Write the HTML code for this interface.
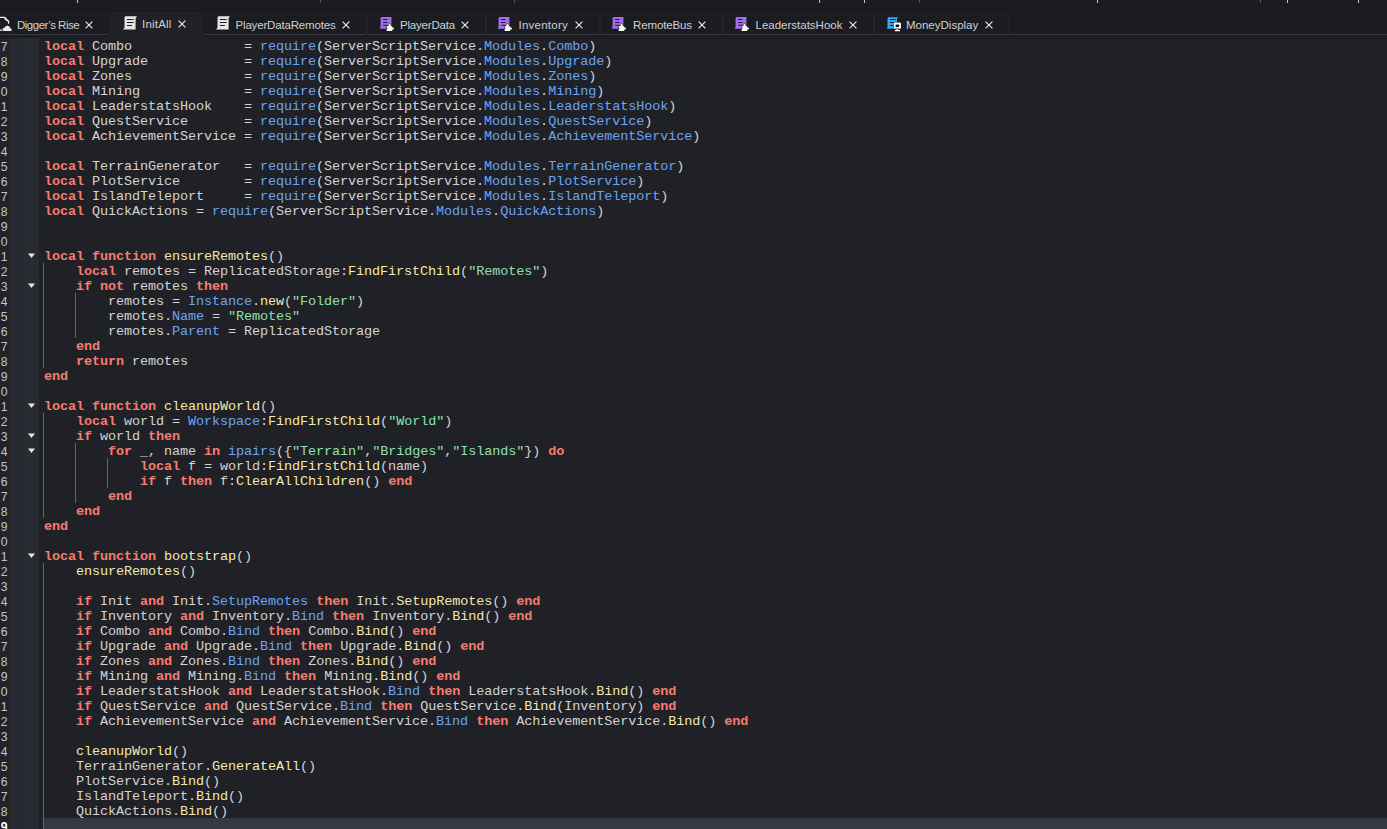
<!DOCTYPE html>
<html><head><meta charset="utf-8"><style>
*{margin:0;padding:0;box-sizing:border-box}
html,body{width:1387px;height:829px;overflow:hidden;background:#1b1c20;position:relative}
.tick{position:absolute;top:0;width:1px;height:3px;background:#c4c4cc}
.tick.dim{background:#55565e}
#tabbar{position:absolute;left:0;top:0;width:1387px;height:35px}
.tabline{position:absolute;left:0;top:34px;width:1387px;height:1px;background:#393a46}
.tab{position:absolute;top:14px;height:21px;border-left:1px solid #232429;border-right:1px solid #232429;border-top:1px solid #222328}
.tab.act{top:11px;height:25px;background:#202126;border:1px solid #18191d;border-bottom:none;box-shadow:inset 0 1px 0 #25262b}
.ico{position:absolute}
.xx{position:absolute}
.tt{position:absolute;top:18px;font:11.5px/14px "Liberation Sans",sans-serif;color:#cfd0d6;white-space:pre}
.tt.at{top:17px}
#ed{position:absolute;left:0;top:37px;width:1387px;height:792px;background:#202126;border-top:1px solid #1e1f24;overflow:hidden}
.g1{position:absolute;top:38px;left:0;width:9px;height:791px;background:#222328}
.g2{position:absolute;top:38px;left:9px;width:15px;height:791px;background:#27282f}
.g3{position:absolute;top:38px;left:24px;width:15px;height:791px;background:#292b32}
.curl{position:absolute;left:44px;top:818px;width:1343px;height:15px;background:#363842}
.ln{position:absolute;left:-0.5px;width:8px;text-align:right;font:12.2px/15px "Liberation Sans",sans-serif;color:#c2c3c8}
.ln.cur{color:#fff;font-weight:bold}
.cl{position:absolute;left:44px;font:13.5px/15px "Liberation Mono",monospace;letter-spacing:-0.1px;color:#d4d4d4;white-space:pre}
.cl b{font-weight:normal}
.cl b.k{color:#f87b6f;font-weight:bold}
.cl b.f{color:#f4e8ae}
.cl b.p{color:#6aa4f5}
.cl b.s{color:#8fe0ae}
.fold{position:absolute;left:27px}
.guide{position:absolute;width:1px;background:#5f647b}
</style></head><body>
<div class="tick" style="left:77px"></div><div class="tick dim" style="left:320px"></div><div class="tick dim" style="left:514px"></div><div class="tick" style="left:819px"></div><div class="tick" style="left:864px"></div><div class="tick dim" style="left:919px"></div><div class="tick" style="left:1097px"></div><div class="tick dim" style="left:1260px"></div><div class="tick" style="left:1287px"></div><div class="tick" style="left:1358px"></div>
<div class="tabline"></div>
<div class="tab" style="left:-10px;width:118px;border-right:none;"></div><svg class="ico" style="left:0px;top:13px" width="14" height="20" viewBox="0 0 14 20"><path d="M-2 4.4 H4.6 L8.6 8.2 V10.8" fill="none" stroke="#ececec" stroke-width="1.25"/><path d="M4.8 4.6 Q4.9 7.4 8.4 8.0" fill="none" stroke="#ececec" stroke-width="1.1"/><path d="M-2 17.2 H2.3" stroke="#ececec" stroke-width="1.25"/><path d="M3.4 17.9 A1.7 1.7 0 0 1 4.6 14.8 A3 3 0 0 1 10.4 15.4 A1.3 1.3 0 0 1 11 17.9 Z" fill="#ececec"/></svg><div class="tt" style="left:17px;letter-spacing:-0.5px">Digger’s Rise</div><svg class="xx" style="left:85px;top:21px" width="8" height="8" viewBox="0 0 8 8"><path d="M0.6 0.6 L7.4 7.4 M7.4 0.6 L0.6 7.4" stroke="#ececec" stroke-width="1.15"/></svg><div class="tab act" style="left:108px;width:96px;"></div><svg class="ico" style="left:122px;top:15px" width="16" height="16" viewBox="0 0 16 16"><path d="M3.6 1.2 Q2.6 1.4 2.5 2.6 V12.6 L1 14.6 H13.6 V3.2 L15 1.2 Z" fill="#e4e4e4"/><rect x="4.8" y="3.9" width="7" height="1.1" rx="0.5" fill="#1e1f23"/><rect x="4.8" y="7" width="7" height="1.1" rx="0.5" fill="#1e1f23"/><rect x="4.8" y="9.9" width="5.2" height="1.1" rx="0.5" fill="#1e1f23"/></svg><div class="tt at" style="left:142px;letter-spacing:0.2px">InitAll</div><svg class="xx" style="left:178px;top:20px" width="8" height="8" viewBox="0 0 8 8"><path d="M0.6 0.6 L7.4 7.4 M7.4 0.6 L0.6 7.4" stroke="#ececec" stroke-width="1.15"/></svg><div class="tab" style="left:204px;width:163px;border-left:none;"></div><svg class="ico" style="left:215px;top:15px" width="16" height="16" viewBox="0 0 16 16"><path d="M3.6 1.2 Q2.6 1.4 2.5 2.6 V12.6 L1 14.6 H13.6 V3.2 L15 1.2 Z" fill="#e4e4e4"/><rect x="4.8" y="3.9" width="7" height="1.1" rx="0.5" fill="#1e1f23"/><rect x="4.8" y="7" width="7" height="1.1" rx="0.5" fill="#1e1f23"/><rect x="4.8" y="9.9" width="5.2" height="1.1" rx="0.5" fill="#1e1f23"/></svg><div class="tt" style="left:235.5px;letter-spacing:-0.17px">PlayerDataRemotes</div><svg class="xx" style="left:342px;top:21px" width="8" height="8" viewBox="0 0 8 8"><path d="M0.6 0.6 L7.4 7.4 M7.4 0.6 L0.6 7.4" stroke="#ececec" stroke-width="1.15"/></svg><div class="tab" style="left:367px;width:119px;"></div><svg class="ico" style="left:376px;top:13px" width="20" height="20" viewBox="0 0 20 20"><path d="M5.6 4 Q4.6 4.2 4.6 5.2 V14 L3.6 15.8 H15.4 V5.6 L15.6 4 Z" fill="#a56cf6"/><rect x="6.9" y="5.9" width="4.8" height="1" rx="0.5" fill="#1b1c20"/><rect x="6.9" y="8.9" width="4.8" height="1" rx="0.5" fill="#1b1c20"/><rect x="6.9" y="11.8" width="4.8" height="1" rx="0.5" fill="#1b1c20"/><path d="M10.6 13.2 H12.4 V12 Q12.4 11 13.6 11 Q14.8 11 14.8 12 V13.2 H16.2 V14.5 H17 Q18 14.5 18 15.5 Q18 16.5 17 16.5 H16.2 V18 H10.6 V16.2 Q11.6 15.8 11.6 15.2 Q11.6 14.6 10.6 14.4 Z" fill="#ffffff" stroke="#1b1c20" stroke-width="1.1" paint-order="stroke"/></svg><div class="tt" style="left:400px;letter-spacing:-0.19px">PlayerData</div><svg class="xx" style="left:461px;top:21px" width="8" height="8" viewBox="0 0 8 8"><path d="M0.6 0.6 L7.4 7.4 M7.4 0.6 L0.6 7.4" stroke="#ececec" stroke-width="1.15"/></svg><div class="tab" style="left:486px;width:114px;"></div><svg class="ico" style="left:494px;top:13px" width="20" height="20" viewBox="0 0 20 20"><path d="M5.6 4 Q4.6 4.2 4.6 5.2 V14 L3.6 15.8 H15.4 V5.6 L15.6 4 Z" fill="#a56cf6"/><rect x="6.9" y="5.9" width="4.8" height="1" rx="0.5" fill="#1b1c20"/><rect x="6.9" y="8.9" width="4.8" height="1" rx="0.5" fill="#1b1c20"/><rect x="6.9" y="11.8" width="4.8" height="1" rx="0.5" fill="#1b1c20"/><path d="M10.6 13.2 H12.4 V12 Q12.4 11 13.6 11 Q14.8 11 14.8 12 V13.2 H16.2 V14.5 H17 Q18 14.5 18 15.5 Q18 16.5 17 16.5 H16.2 V18 H10.6 V16.2 Q11.6 15.8 11.6 15.2 Q11.6 14.6 10.6 14.4 Z" fill="#ffffff" stroke="#1b1c20" stroke-width="1.1" paint-order="stroke"/></svg><div class="tt" style="left:518.5px;letter-spacing:0.24px">Inventory</div><svg class="xx" style="left:575px;top:21px" width="8" height="8" viewBox="0 0 8 8"><path d="M0.6 0.6 L7.4 7.4 M7.4 0.6 L0.6 7.4" stroke="#ececec" stroke-width="1.15"/></svg><div class="tab" style="left:600px;width:123px;"></div><svg class="ico" style="left:608px;top:13px" width="20" height="20" viewBox="0 0 20 20"><path d="M5.6 4 Q4.6 4.2 4.6 5.2 V14 L3.6 15.8 H15.4 V5.6 L15.6 4 Z" fill="#a56cf6"/><rect x="6.9" y="5.9" width="4.8" height="1" rx="0.5" fill="#1b1c20"/><rect x="6.9" y="8.9" width="4.8" height="1" rx="0.5" fill="#1b1c20"/><rect x="6.9" y="11.8" width="4.8" height="1" rx="0.5" fill="#1b1c20"/><path d="M10.6 13.2 H12.4 V12 Q12.4 11 13.6 11 Q14.8 11 14.8 12 V13.2 H16.2 V14.5 H17 Q18 14.5 18 15.5 Q18 16.5 17 16.5 H16.2 V18 H10.6 V16.2 Q11.6 15.8 11.6 15.2 Q11.6 14.6 10.6 14.4 Z" fill="#ffffff" stroke="#1b1c20" stroke-width="1.1" paint-order="stroke"/></svg><div class="tt" style="left:633px;letter-spacing:-0.12px">RemoteBus</div><svg class="xx" style="left:698px;top:21px" width="8" height="8" viewBox="0 0 8 8"><path d="M0.6 0.6 L7.4 7.4 M7.4 0.6 L0.6 7.4" stroke="#ececec" stroke-width="1.15"/></svg><div class="tab" style="left:723px;width:151px;"></div><svg class="ico" style="left:731px;top:13px" width="20" height="20" viewBox="0 0 20 20"><path d="M5.6 4 Q4.6 4.2 4.6 5.2 V14 L3.6 15.8 H15.4 V5.6 L15.6 4 Z" fill="#a56cf6"/><rect x="6.9" y="5.9" width="4.8" height="1" rx="0.5" fill="#1b1c20"/><rect x="6.9" y="8.9" width="4.8" height="1" rx="0.5" fill="#1b1c20"/><rect x="6.9" y="11.8" width="4.8" height="1" rx="0.5" fill="#1b1c20"/><path d="M10.6 13.2 H12.4 V12 Q12.4 11 13.6 11 Q14.8 11 14.8 12 V13.2 H16.2 V14.5 H17 Q18 14.5 18 15.5 Q18 16.5 17 16.5 H16.2 V18 H10.6 V16.2 Q11.6 15.8 11.6 15.2 Q11.6 14.6 10.6 14.4 Z" fill="#ffffff" stroke="#1b1c20" stroke-width="1.1" paint-order="stroke"/></svg><div class="tt" style="left:755.5px;letter-spacing:0px">LeaderstatsHook</div><svg class="xx" style="left:849px;top:21px" width="8" height="8" viewBox="0 0 8 8"><path d="M0.6 0.6 L7.4 7.4 M7.4 0.6 L0.6 7.4" stroke="#ececec" stroke-width="1.15"/></svg><div class="tab" style="left:874px;width:135px;"></div><svg class="ico" style="left:882px;top:13px" width="20" height="20" viewBox="0 0 20 20"><path d="M6.3 4.2 Q5.5 4.4 5.5 5.4 V14 L4.9 15.7 H15 V5.6 L16.7 4.2 Z" fill="#2fa9f6"/><rect x="8" y="5.9" width="5.8" height="1" rx="0.5" fill="#1b1c20"/><rect x="8" y="8.9" width="3.5" height="1" rx="0.5" fill="#1b1c20"/><rect x="8" y="11.9" width="3.5" height="1" rx="0.5" fill="#1b1c20"/><rect x="11.7" y="9.5" width="7.3" height="6.2" rx="1.2" fill="#fff" stroke="#1b1c20" stroke-width="1.1" paint-order="stroke"/><rect x="13.6" y="11.5" width="3.6" height="2.5" rx="0.6" fill="#111"/><path d="M14.5 15.5 H16.2 V17 H18 V18.2 H12.8 V17 H14.5 Z" fill="#fff" stroke="#1b1c20" stroke-width="1" paint-order="stroke"/></svg><div class="tt" style="left:906px;letter-spacing:0px">MoneyDisplay</div><svg class="xx" style="left:985px;top:21px" width="8" height="8" viewBox="0 0 8 8"><path d="M0.6 0.6 L7.4 7.4 M7.4 0.6 L0.6 7.4" stroke="#ececec" stroke-width="1.15"/></svg>
<div id="ed"></div>
<div class="g1"></div><div class="g2"></div><div class="g3"></div>
<div class="curl"></div>
<div class="guide" style="left:43px;top:263px;height:105px"></div><div class="guide" style="left:75px;top:293px;height:45px"></div><div class="guide" style="left:43px;top:413px;height:105px"></div><div class="guide" style="left:75px;top:443px;height:60px"></div><div class="guide" style="left:107px;top:458px;height:30px"></div><div class="guide" style="left:43px;top:563px;height:270px"></div>
<svg class="fold" style="top:248px" width="10" height="15" viewBox="0 0 10 15"><path d="M1 5.5 H8 L4.5 10 Z" fill="#e6e6e6"/></svg><svg class="fold" style="top:278px" width="10" height="15" viewBox="0 0 10 15"><path d="M1 5.5 H8 L4.5 10 Z" fill="#e6e6e6"/></svg><svg class="fold" style="top:398px" width="10" height="15" viewBox="0 0 10 15"><path d="M1 5.5 H8 L4.5 10 Z" fill="#e6e6e6"/></svg><svg class="fold" style="top:428px" width="10" height="15" viewBox="0 0 10 15"><path d="M1 5.5 H8 L4.5 10 Z" fill="#e6e6e6"/></svg><svg class="fold" style="top:443px" width="10" height="15" viewBox="0 0 10 15"><path d="M1 5.5 H8 L4.5 10 Z" fill="#e6e6e6"/></svg><svg class="fold" style="top:548px" width="10" height="15" viewBox="0 0 10 15"><path d="M1 5.5 H8 L4.5 10 Z" fill="#e6e6e6"/></svg>
<div class="ln" style="top:40px">7</div>
<div class="cl" style="top:39px"><b class="k">local</b> Combo              = <b class="p">require</b>(ServerScriptService.<b class="p">Modules</b>.<b class="p">Combo</b>)</div>
<div class="ln" style="top:55px">8</div>
<div class="cl" style="top:54px"><b class="k">local</b> Upgrade            = <b class="p">require</b>(ServerScriptService.<b class="p">Modules</b>.<b class="p">Upgrade</b>)</div>
<div class="ln" style="top:70px">9</div>
<div class="cl" style="top:69px"><b class="k">local</b> Zones              = <b class="p">require</b>(ServerScriptService.<b class="p">Modules</b>.<b class="p">Zones</b>)</div>
<div class="ln" style="top:85px">0</div>
<div class="cl" style="top:84px"><b class="k">local</b> Mining             = <b class="p">require</b>(ServerScriptService.<b class="p">Modules</b>.<b class="p">Mining</b>)</div>
<div class="ln" style="top:100px">1</div>
<div class="cl" style="top:99px"><b class="k">local</b> LeaderstatsHook    = <b class="p">require</b>(ServerScriptService.<b class="p">Modules</b>.<b class="p">LeaderstatsHook</b>)</div>
<div class="ln" style="top:115px">2</div>
<div class="cl" style="top:114px"><b class="k">local</b> QuestService       = <b class="p">require</b>(ServerScriptService.<b class="p">Modules</b>.<b class="p">QuestService</b>)</div>
<div class="ln" style="top:130px">3</div>
<div class="cl" style="top:129px"><b class="k">local</b> AchievementService = <b class="p">require</b>(ServerScriptService.<b class="p">Modules</b>.<b class="p">AchievementService</b>)</div>
<div class="ln" style="top:145px">4</div>
<div class="cl" style="top:144px"></div>
<div class="ln" style="top:160px">5</div>
<div class="cl" style="top:159px"><b class="k">local</b> TerrainGenerator   = <b class="p">require</b>(ServerScriptService.<b class="p">Modules</b>.<b class="p">TerrainGenerator</b>)</div>
<div class="ln" style="top:175px">6</div>
<div class="cl" style="top:174px"><b class="k">local</b> PlotService        = <b class="p">require</b>(ServerScriptService.<b class="p">Modules</b>.<b class="p">PlotService</b>)</div>
<div class="ln" style="top:190px">7</div>
<div class="cl" style="top:189px"><b class="k">local</b> IslandTeleport     = <b class="p">require</b>(ServerScriptService.<b class="p">Modules</b>.<b class="p">IslandTeleport</b>)</div>
<div class="ln" style="top:205px">8</div>
<div class="cl" style="top:204px"><b class="k">local</b> QuickActions = <b class="p">require</b>(ServerScriptService.<b class="p">Modules</b>.<b class="p">QuickActions</b>)</div>
<div class="ln" style="top:220px">9</div>
<div class="cl" style="top:219px"></div>
<div class="ln" style="top:235px">0</div>
<div class="cl" style="top:234px"></div>
<div class="ln" style="top:250px">1</div>
<div class="cl" style="top:249px"><b class="k">local</b> <b class="k">function</b> <b class="f">ensureRemotes</b>()</div>
<div class="ln" style="top:265px">2</div>
<div class="cl" style="top:264px">    <b class="k">local</b> remotes = ReplicatedStorage:<b class="f">FindFirstChild</b>(<b class="s">&quot;Remotes&quot;</b>)</div>
<div class="ln" style="top:280px">3</div>
<div class="cl" style="top:279px">    <b class="k">if</b> <b class="k">not</b> remotes <b class="k">then</b></div>
<div class="ln" style="top:295px">4</div>
<div class="cl" style="top:294px">        remotes = <b class="p">Instance</b>.<b class="f">new</b>(<b class="s">&quot;Folder&quot;</b>)</div>
<div class="ln" style="top:310px">5</div>
<div class="cl" style="top:309px">        remotes.<b class="p">Name</b> = <b class="s">&quot;Remotes&quot;</b></div>
<div class="ln" style="top:325px">6</div>
<div class="cl" style="top:324px">        remotes.<b class="p">Parent</b> = ReplicatedStorage</div>
<div class="ln" style="top:340px">7</div>
<div class="cl" style="top:339px">    <b class="k">end</b></div>
<div class="ln" style="top:355px">8</div>
<div class="cl" style="top:354px">    <b class="k">return</b> remotes</div>
<div class="ln" style="top:370px">9</div>
<div class="cl" style="top:369px"><b class="k">end</b></div>
<div class="ln" style="top:385px">0</div>
<div class="cl" style="top:384px"></div>
<div class="ln" style="top:400px">1</div>
<div class="cl" style="top:399px"><b class="k">local</b> <b class="k">function</b> <b class="f">cleanupWorld</b>()</div>
<div class="ln" style="top:415px">2</div>
<div class="cl" style="top:414px">    <b class="k">local</b> world = <b class="p">Workspace</b>:<b class="f">FindFirstChild</b>(<b class="s">&quot;World&quot;</b>)</div>
<div class="ln" style="top:430px">3</div>
<div class="cl" style="top:429px">    <b class="k">if</b> world <b class="k">then</b></div>
<div class="ln" style="top:445px">4</div>
<div class="cl" style="top:444px">        <b class="k">for</b> _, name <b class="k">in</b> <b class="p">ipairs</b>({<b class="s">&quot;Terrain&quot;</b>,<b class="s">&quot;Bridges&quot;</b>,<b class="s">&quot;Islands&quot;</b>}) <b class="k">do</b></div>
<div class="ln" style="top:460px">5</div>
<div class="cl" style="top:459px">            <b class="k">local</b> f = world:<b class="f">FindFirstChild</b>(name)</div>
<div class="ln" style="top:475px">6</div>
<div class="cl" style="top:474px">            <b class="k">if</b> f <b class="k">then</b> f:<b class="f">ClearAllChildren</b>() <b class="k">end</b></div>
<div class="ln" style="top:490px">7</div>
<div class="cl" style="top:489px">        <b class="k">end</b></div>
<div class="ln" style="top:505px">8</div>
<div class="cl" style="top:504px">    <b class="k">end</b></div>
<div class="ln" style="top:520px">9</div>
<div class="cl" style="top:519px"><b class="k">end</b></div>
<div class="ln" style="top:535px">0</div>
<div class="cl" style="top:534px"></div>
<div class="ln" style="top:550px">1</div>
<div class="cl" style="top:549px"><b class="k">local</b> <b class="k">function</b> <b class="f">bootstrap</b>()</div>
<div class="ln" style="top:565px">2</div>
<div class="cl" style="top:564px">    <b class="f">ensureRemotes</b>()</div>
<div class="ln" style="top:580px">3</div>
<div class="cl" style="top:579px"></div>
<div class="ln" style="top:595px">4</div>
<div class="cl" style="top:594px">    <b class="k">if</b> Init <b class="k">and</b> Init.<b class="p">SetupRemotes</b> <b class="k">then</b> Init.<b class="f">SetupRemotes</b>() <b class="k">end</b></div>
<div class="ln" style="top:610px">5</div>
<div class="cl" style="top:609px">    <b class="k">if</b> Inventory <b class="k">and</b> Inventory.<b class="p">Bind</b> <b class="k">then</b> Inventory.<b class="f">Bind</b>() <b class="k">end</b></div>
<div class="ln" style="top:625px">6</div>
<div class="cl" style="top:624px">    <b class="k">if</b> Combo <b class="k">and</b> Combo.<b class="p">Bind</b> <b class="k">then</b> Combo.<b class="f">Bind</b>() <b class="k">end</b></div>
<div class="ln" style="top:640px">7</div>
<div class="cl" style="top:639px">    <b class="k">if</b> Upgrade <b class="k">and</b> Upgrade.<b class="p">Bind</b> <b class="k">then</b> Upgrade.<b class="f">Bind</b>() <b class="k">end</b></div>
<div class="ln" style="top:655px">8</div>
<div class="cl" style="top:654px">    <b class="k">if</b> Zones <b class="k">and</b> Zones.<b class="p">Bind</b> <b class="k">then</b> Zones.<b class="f">Bind</b>() <b class="k">end</b></div>
<div class="ln" style="top:670px">9</div>
<div class="cl" style="top:669px">    <b class="k">if</b> Mining <b class="k">and</b> Mining.<b class="p">Bind</b> <b class="k">then</b> Mining.<b class="f">Bind</b>() <b class="k">end</b></div>
<div class="ln" style="top:685px">0</div>
<div class="cl" style="top:684px">    <b class="k">if</b> LeaderstatsHook <b class="k">and</b> LeaderstatsHook.<b class="p">Bind</b> <b class="k">then</b> LeaderstatsHook.<b class="f">Bind</b>() <b class="k">end</b></div>
<div class="ln" style="top:700px">1</div>
<div class="cl" style="top:699px">    <b class="k">if</b> QuestService <b class="k">and</b> QuestService.<b class="p">Bind</b> <b class="k">then</b> QuestService.<b class="f">Bind</b>(Inventory) <b class="k">end</b></div>
<div class="ln" style="top:715px">2</div>
<div class="cl" style="top:714px">    <b class="k">if</b> AchievementService <b class="k">and</b> AchievementService.<b class="p">Bind</b> <b class="k">then</b> AchievementService.<b class="f">Bind</b>() <b class="k">end</b></div>
<div class="ln" style="top:730px">3</div>
<div class="cl" style="top:729px"></div>
<div class="ln" style="top:745px">4</div>
<div class="cl" style="top:744px">    <b class="f">cleanupWorld</b>()</div>
<div class="ln" style="top:760px">5</div>
<div class="cl" style="top:759px">    TerrainGenerator.<b class="f">GenerateAll</b>()</div>
<div class="ln" style="top:775px">6</div>
<div class="cl" style="top:774px">    PlotService.<b class="f">Bind</b>()</div>
<div class="ln" style="top:790px">7</div>
<div class="cl" style="top:789px">    IslandTeleport.<b class="f">Bind</b>()</div>
<div class="ln" style="top:805px">8</div>
<div class="cl" style="top:804px">    QuickActions.<b class="f">Bind</b>()</div>
<div class="ln cur" style="top:820px">9</div>
<div class="cl" style="top:819px"></div>
</body></html>
